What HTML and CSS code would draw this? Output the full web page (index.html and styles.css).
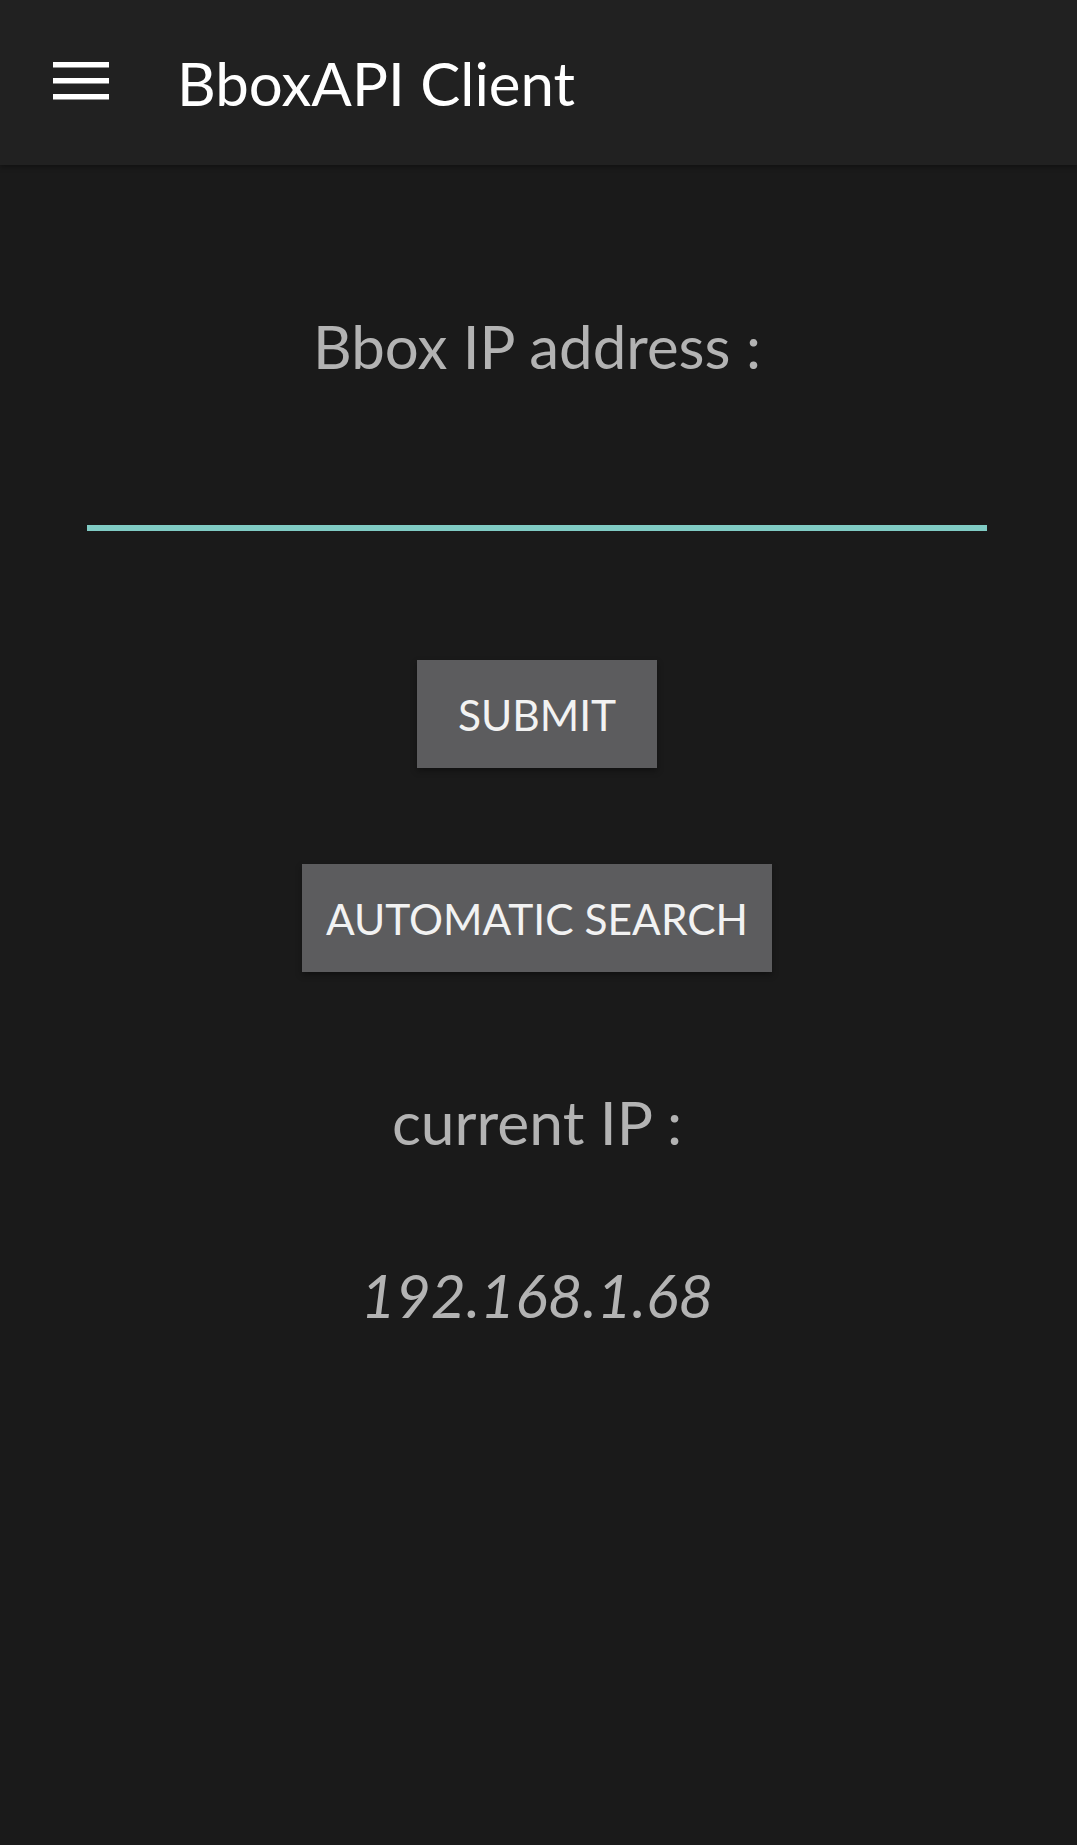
FILE: index.html
```html
<!DOCTYPE html>
<html lang="en">
<head>
<meta charset="utf-8">
<title>BboxAPI Client</title>
<link rel="stylesheet" href="styles.css">
</head>
<body>
<header class="appbar">
  <button class="menu-btn" aria-label="Menu">
    <svg class="menu-icon" width="56" height="38" viewBox="0 0 56 38">
      <rect x="0" y="0" width="56" height="5.5" fill="#ffffff"/>
      <rect x="0" y="16" width="56" height="5.5" fill="#ffffff"/>
      <rect x="0" y="32" width="56" height="5.5" fill="#ffffff"/>
    </svg>
  </button>
  <h1 class="appbar-title">BboxAPI Client</h1>
</header>
<main class="content">
  <label class="field-label" for="ip">Bbox IP address :</label>
  <input class="ip-input" id="ip" type="text">
  <button class="raised-btn submit-btn">SUBMIT</button>
  <button class="raised-btn search-btn">AUTOMATIC SEARCH</button>
  <p class="current-label">current IP :</p>
  <p class="current-ip">192.168.1.68</p>
</main>
</body>
</html>
```
FILE: styles.css
```css
html, body {
  margin: 0;
  padding: 0;
  background: #1a1a1a;
  font-family: Lato, "Open Sans", sans-serif;
}

body {
  min-height: 1845px;
}

.appbar {
  height: 165px;
  background: #212121;
  display: flex;
  align-items: center;
  box-shadow: 0 2px 5px rgba(0, 0, 0, 0.35);
  position: relative;
  z-index: 1;
}

.menu-btn {
  margin-left: 53px;
  padding: 0;
  border: 0;
  background: transparent;
  display: flex;
  margin-bottom: 4px;
}

.appbar-title {
  margin: 0 0 0 68px;
  font-size: 60px;
  font-weight: 400;
  color: #ffffff;
  line-height: 1.2;
}

.content {
  display: flex;
  flex-direction: column;
  align-items: center;
  padding-right: 3px;
}

.field-label {
  margin-top: 145px;
  font-size: 60px;
  line-height: 1.2;
  color: #b3b3b3;
}

.ip-input {
  margin-top: 70px;
  width: 900px;
  height: 79px;
  box-sizing: border-box;
  background: transparent;
  border: 0;
  border-bottom: 6px solid #80cbc4;
  outline: none;
  color: #ffffff;
  font-family: Lato, sans-serif;
  font-size: 48px;
}

.raised-btn {
  height: 108px;
  min-width: 240px;
  padding: 0 24px;
  border: 0;
  background: #5c5c5e;
  color: #f2f2f2;
  font-family: Lato, sans-serif;
  font-size: 42.5px;
  line-height: 1.2;
  box-shadow: 0 3px 6px rgba(0, 0, 0, 0.35);
  display: flex;
  align-items: center;
  justify-content: center;
}

.submit-btn {
  margin-top: 129px;
}

.search-btn {
  margin-top: 96px;
}

.current-label {
  margin: 114px 0 0;
  font-size: 60.5px;
  line-height: 1.2;
  color: #b3b3b3;
}

.current-ip {
  margin: 100px 0 0;
  font-size: 60.5px;
  line-height: 1.2;
  font-style: italic;
  color: #b3b3b3;
}
```
